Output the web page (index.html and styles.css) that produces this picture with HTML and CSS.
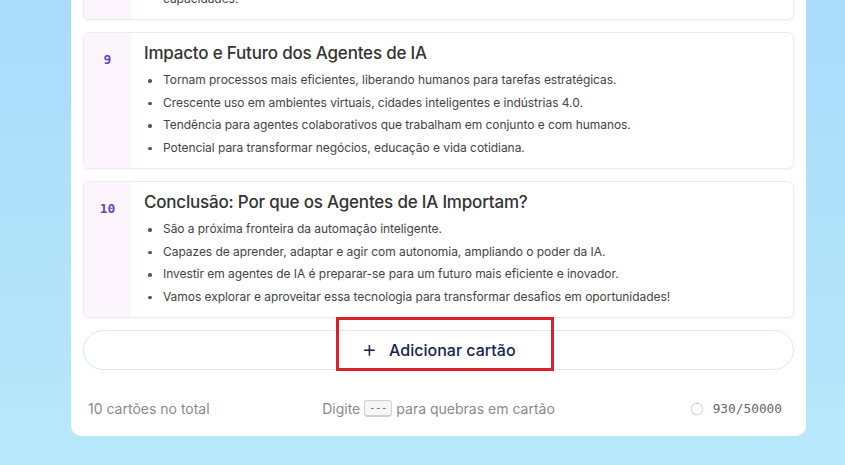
FILE: index.html
```html
<!DOCTYPE html>
<html lang="pt-BR">
<head>
<meta charset="utf-8">
<title>Cartões</title>
<link rel="stylesheet" href="styles.css">
</head>
<body>
<main class="panel">
  <section class="card">
    <div class="num">8</div>
    <div class="body">
      <h2 class="title">Desafios e Considerações Éticas</h2>
      <ul class="list">
        <li>Privacidade e segurança dos dados utilizados pelos agentes.</li>
        <li>Transparência nas decisões tomadas de forma autônoma.</li>
        <li>Responsabilidade sobre erros e impactos sociais.</li>
        <li class="cont">capacidades.</li>
      </ul>
    </div>
  </section>
  <section class="card">
    <div class="num">9</div>
    <div class="body">
      <h2 class="title">Impacto e Futuro dos Agentes de IA</h2>
      <ul class="list">
        <li>Tornam processos mais eficientes, liberando humanos para tarefas estratégicas.</li>
        <li>Crescente uso em ambientes virtuais, cidades inteligentes e indústrias 4.0.</li>
        <li>Tendência para agentes colaborativos que trabalham em conjunto e com humanos.</li>
        <li>Potencial para transformar negócios, educação e vida cotidiana.</li>
      </ul>
    </div>
  </section>
  <section class="card">
    <div class="num">10</div>
    <div class="body">
      <h2 class="title">Conclusão: Por que os Agentes de IA Importam?</h2>
      <ul class="list">
        <li>São a próxima fronteira da automação inteligente.</li>
        <li>Capazes de aprender, adaptar e agir com autonomia, ampliando o poder da IA.</li>
        <li>Investir em agentes de IA é preparar-se para um futuro mais eficiente e inovador.</li>
        <li>Vamos explorar e aproveitar essa tecnologia para transformar desafios em oportunidades!</li>
      </ul>
    </div>
  </section>
  <div class="add-wrap">
    <button class="add" type="button"><span class="plus">+</span><span>Adicionar cartão</span></button>
    <span class="highlight"></span>
  </div>
  <footer class="foot">
    <span class="total">10 cartões no total</span>
    <span class="hint">Digite <kbd class="kbd">---</kbd> para quebras em cartão</span>
    <span class="count">
      <svg class="ring" width="14" height="14" viewBox="0 0 14 14"><circle cx="7" cy="7" r="5.8" fill="none" stroke="#e2e2e2" stroke-width="1.5"/><path d="M7 1.2 A5.8 5.8 0 0 1 7.6 1.23" fill="none" stroke="#888" stroke-width="1.5"/></svg>
      <span class="mono">930/50000</span>
    </span>
  </footer>
</main>
</body>
</html>
```
FILE: styles.css
```css
* { box-sizing: border-box; }
html, body { margin: 0; padding: 0; }
body {
  width: 845px;
  height: 465px;
  overflow: hidden;
  background: linear-gradient(180deg, #a8dcfa 0%, #b3e4fa 70%, #b8e8fa 100%);
  font-family: "Inter", "Noto Sans", sans-serif;
}
.panel {
  width: 735px;
  margin: -129px 0 0 71px;
  background: #fff;
  border-radius: 0 0 10px 10px;
  padding: 12px 12px 0 12px;
  display: flex;
  flex-direction: column;
  gap: 12px;
}
.card {
  display: flex;
  background: #fff;
  border: 1px solid #ececec;
  border-radius: 6px;
  box-shadow: 0 1px 3px rgba(0,0,0,0.04);
  overflow: hidden;
}
.num {
  width: 47px;
  flex: none;
  background: #fcf5fe;
  text-align: center;
  padding-top: 17px;
  font-family: "DejaVu Sans Mono", monospace;
  font-weight: bold;
  font-size: 13px;
  line-height: 20px;
  color: #5b49b8;
}
.body {
  flex: 1;
  padding: 8px 13px 9px 13px;
}
.title {
  margin: 0;
  font-size: 17px;
  line-height: 24px;
  font-weight: 500;
  color: #333;
  letter-spacing: -0.2px;
}
.list {
  list-style: none;
  margin: 4px 0 0 0;
  padding: 0 0 0 19px;
}
.list li {
  position: relative;
  font-size: 12px;
  line-height: 22.5px;
  color: #444;
  letter-spacing: -0.05px;
}
.list li::before {
  content: "";
  position: absolute;
  left: -15px;
  top: 10px;
  width: 3.5px;
  height: 3.5px;
  border-radius: 50%;
  background: #555;
}
.list li.cont::before { display: none; }
.add-wrap {
  position: relative;
}
.add {
  width: 100%;
  height: 40px;
  border: 1px solid #dde7f2;
  border-radius: 20px;
  background: #fff;
  display: flex;
  align-items: center;
  justify-content: center;
  gap: 12px;
  font-family: "Inter", "Noto Sans", sans-serif;
  font-size: 16px;
  font-weight: 500;
  color: #16244d;
  cursor: pointer;
}
.plus {
  font-size: 24px;
  font-weight: 300;
  line-height: 1;
  margin-top: -2px;
}
.highlight {
  position: absolute;
  left: 253px;
  top: -13px;
  width: 218px;
  height: 54px;
  border: 3px solid #dc1f2a;
  pointer-events: none;
}
.foot {
  display: grid;
  grid-template-columns: 1fr auto 1fr;
  align-items: center;
  padding: 18px 12px 19px 12px;
  font-size: 14px;
  color: #8a8a8a;
}
.total { justify-self: start; margin-left: -7px; }
.hint { justify-self: center; display: flex; align-items: center; gap: 4px; }
.kbd {
  display: inline-block;
  font-family: "DejaVu Sans Mono", monospace;
  font-size: 10px;
  line-height: 14px;
  padding: 0 4px;
  border: 1px solid #cfcfcf;
  border-bottom-width: 2px;
  border-radius: 4px;
  background: #f6f6f6;
  color: #666;
}
.count { justify-self: end; display: flex; align-items: center; gap: 9px; }
.mono {
  font-family: "DejaVu Sans Mono", monospace;
  font-size: 12.8px;
  color: #666;
}
```
